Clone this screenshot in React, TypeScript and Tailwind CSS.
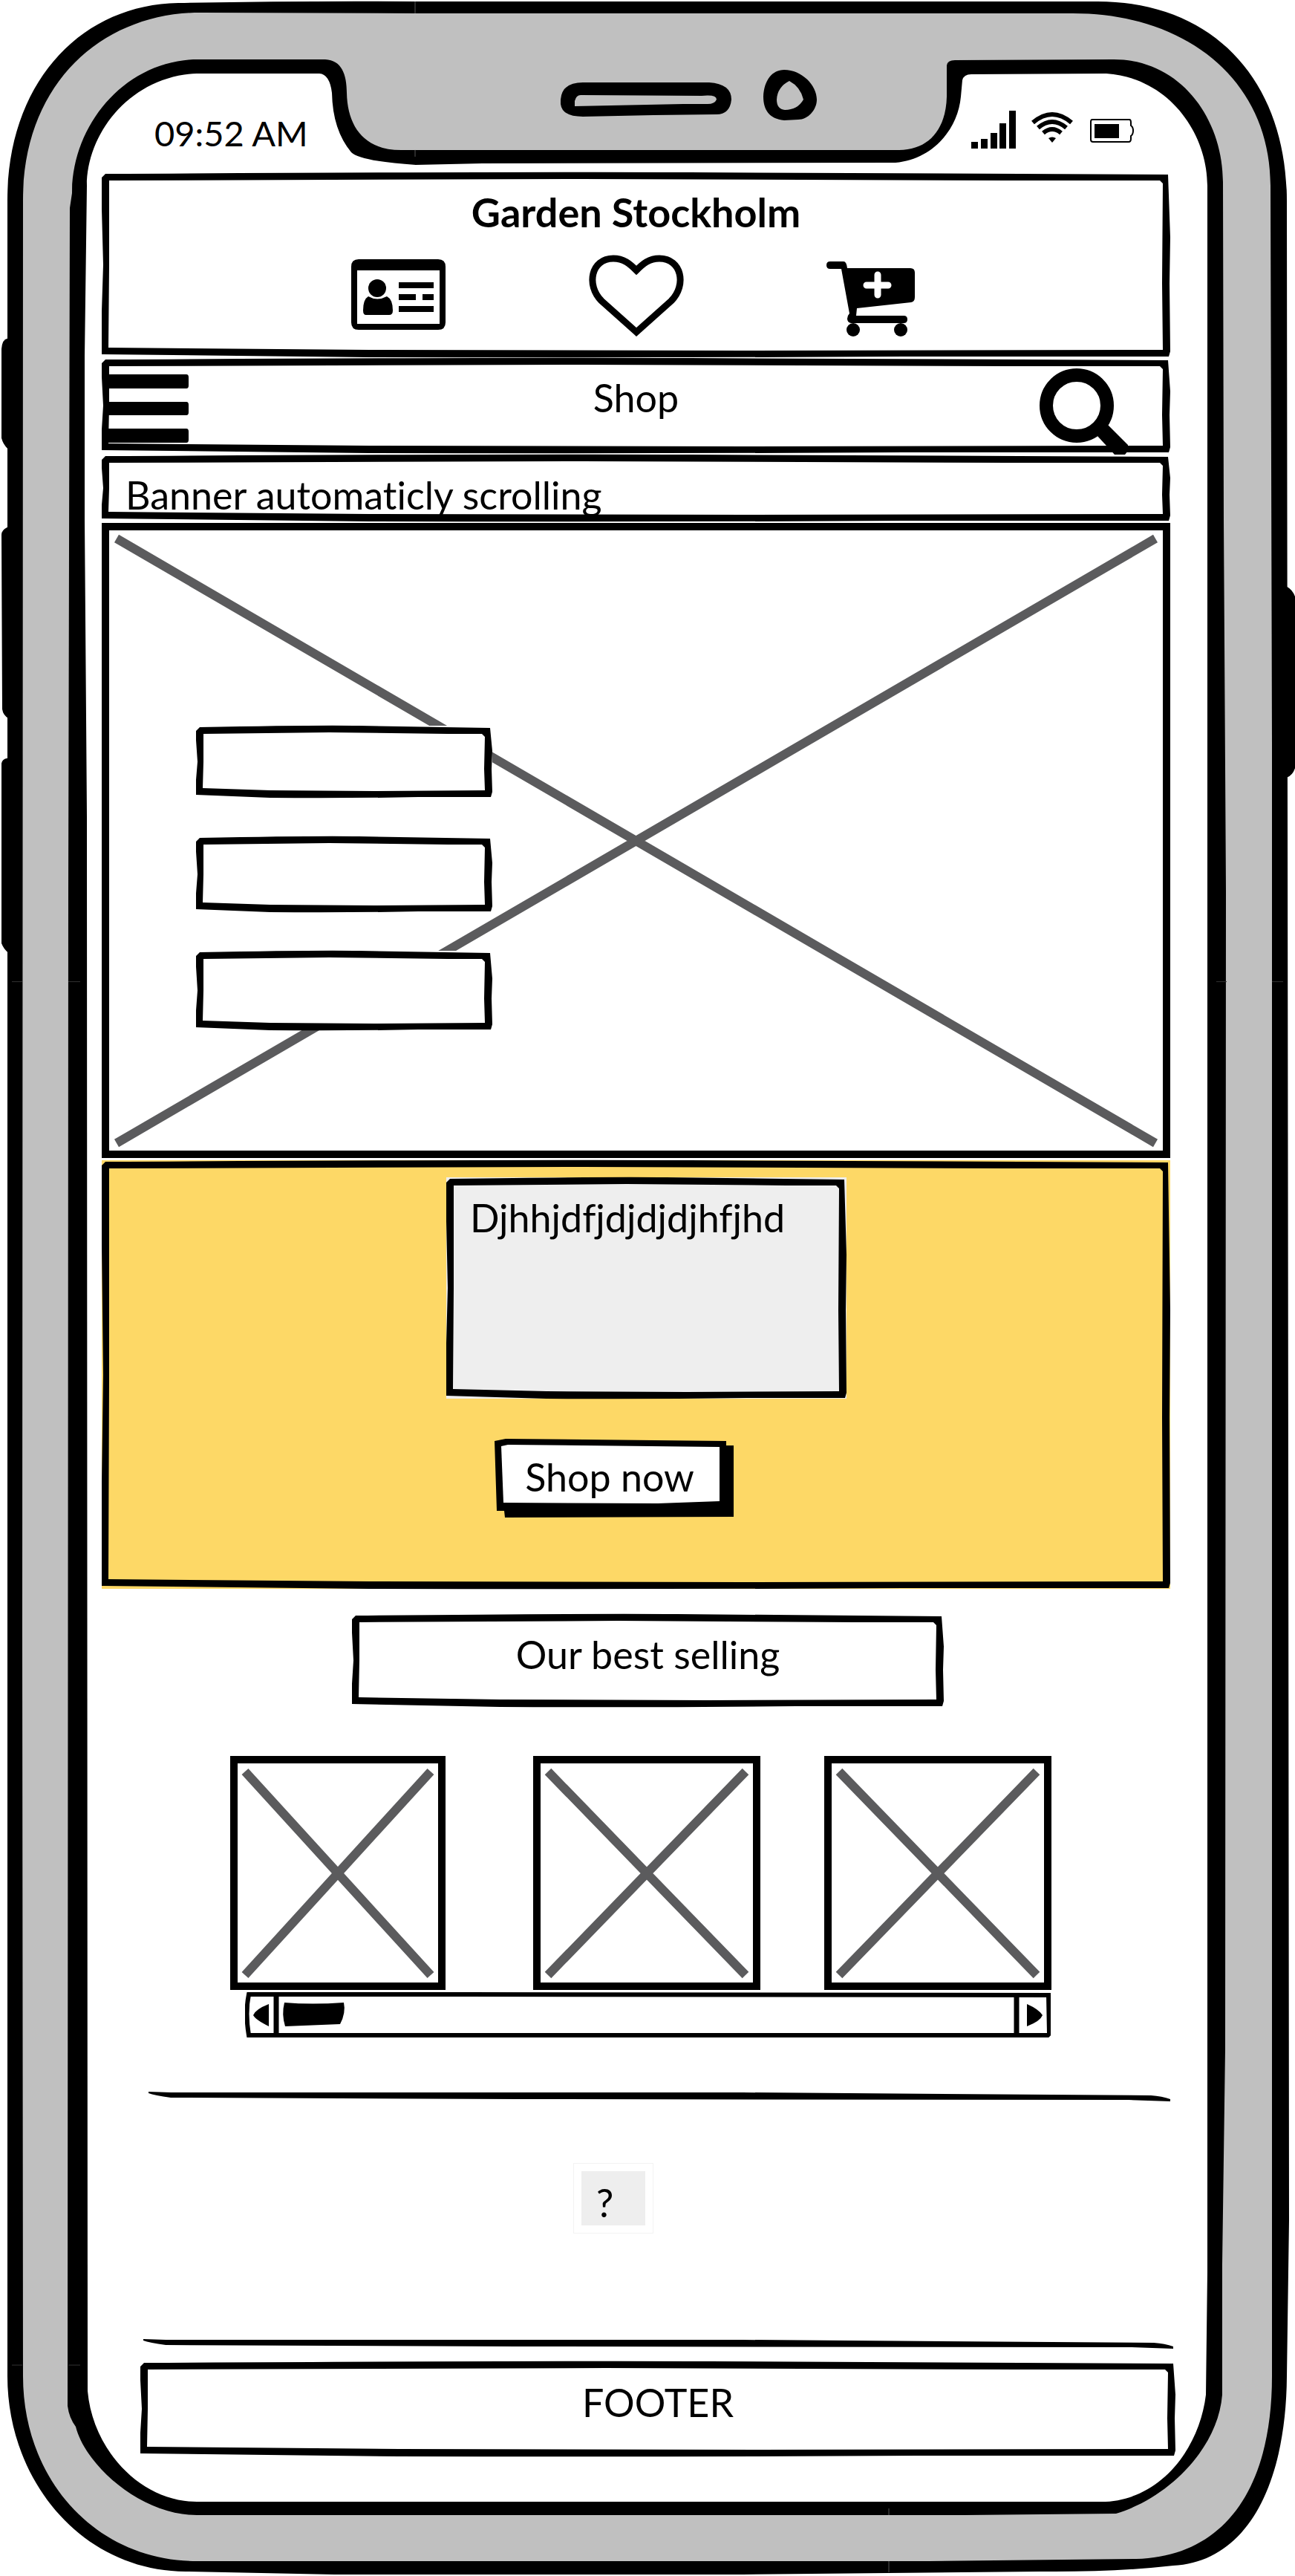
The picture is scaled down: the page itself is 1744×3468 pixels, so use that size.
import type { ReactNode } from "react";

/* Hand-drawn rectangle outline; w and h give the proportions of the wobble. */
function SketchOutline({ w, h }: { w: number; h: number }) {
  const outer = `M0,7 L5,2 Q${w * 0.4},-1 ${w * 0.55},0 L${w - 3},3 L${w},${h * 0.35} L${w - 1},${h * 0.6} L${w},${h - 8} L${w - 2},${h - 1} L${w * 0.75},${h - 1} Q${w * 0.5},${h + 1} ${w * 0.25},${h} L0,${h - 4} L0,${h * 0.75} L2,${h * 0.5} L0,${h * 0.2} Z`;
  const inner = `M10,11 L${w * 0.45},9 L${w * 0.85},11 L${w - 14},11 L${w - 10},15 L${w - 11},${h * 0.6} L${w - 10},${h - 10} L${w * 0.6},${h - 9} L${w * 0.25},${h - 10} L9,${h - 13} L10,${h * 0.5} Z`;
  return (
    <svg
      aria-hidden="true"
      className="pointer-events-none absolute inset-0 h-full w-full overflow-visible"
      viewBox={`0 0 ${w} ${h}`}
      preserveAspectRatio="none"
    >
      <path d={`${outer} ${inner}`} fill="#000" fillRule="evenodd" />
    </svg>
  );
}

function Placeholder({
  w,
  h,
  className,
  children,
}: {
  w: number;
  h: number;
  className: string;
  children?: ReactNode;
}) {
  return (
    <div className={`relative border-[10px] border-black bg-white ${className}`}>
      <svg
        aria-hidden="true"
        className="absolute inset-0 h-full w-full"
        viewBox={`0 0 ${w} ${h}`}
        preserveAspectRatio="none"
      >
        <path
          d={`M10,11 L${w - 10},${h - 10} M${w - 10},11 L10,${h - 10}`}
          stroke="#5b5b5d"
          strokeWidth="12"
          fill="none"
        />
      </svg>
      {children}
    </div>
  );
}

function PhoneFrame() {
  return (
    <svg
      aria-hidden="true"
      className="absolute inset-0 h-full w-full"
      viewBox="0 0 1744 3468"
      preserveAspectRatio="none"
    >
      <path
        d="M10,456 Q3,457 2,470 L2,590 Q4,598 10,604 Z M10,710 Q2,714 2,720 L3,955 Q4,963 12,968 Z M10,1021 Q3,1022 2,1028 L2,1270 Q4,1277 12,1284 Z M1733,790 Q1744,796 1746,812 V1025 Q1744,1043 1733,1047 Z"
        fill="#000"
      />
      <path
        d="M240,4 Q400,1 560,2 L1478,2 C1640,2 1733,115 1733,270 L1735,2000 L1736,2990 L1733,3200 C1732,3345 1680,3450 1580,3455 Q1500,3464 1400,3463 L1000,3467 L450,3467 L250,3463 C110,3462 10,3340 10,3200 L10,2000 L10,270 C10,110 110,6 240,4 Z"
        fill="#000"
      />
      <path
        d="M270,17 L560,18 L1445,18 C1600,18 1711,110 1711,250 L1713,1000 L1713,3200 C1713,3350 1650,3443 1530,3446 L1250,3449 L265,3449 C130,3449 31,3340 31,3200 L30,2200 L31,270 C31,110 140,17 270,17 Z"
        fill="#c0c0c0"
      />
      <path
        d="M260,80 L438,80 C460,81 467,100 467,125 C468,170 490,202 540,202 L1211,202 C1250,202 1274,175 1275,130 L1275,88 Q1276,81 1286,81 L1500,80 C1590,80 1647,160 1647,245 L1648,700 L1651,1200 L1650,2760 L1646,3050 L1646,3225 C1640,3300 1570,3365 1503,3385 L1300,3387 L265,3387 C190,3387 115,3320 102,3268 Q93,3256 91,3240 L92,1200 L94,280 L97,260 C97,170 165,85 260,80 Z"
        fill="#000"
      />
      <path
        d="M265,99 L430,99 Q444,100 447,125 Q448,175 473,205 Q485,217 560,222 L650,220 L1206,219 C1255,215 1290,175 1294,130 L1296,108 Q1298,100 1308,100 L1490,99 C1575,105 1626,180 1626,250 L1626,3060 L1624,3225 C1615,3300 1560,3369 1483,3369 L265,3369 C190,3369 125,3300 118,3220 L117,1100 L114,700 L114,480 L117,250 C117,180 175,103 265,99 Z"
        fill="#fff"
      />
      <path
        d="M785,111 L955,111 Q985,113 985,134 Q983,154 965,154 L880,155 L785,157 Q757,157 755,140 L755,134 Q757,111 785,111 Z"
        fill="#000"
      />
      <path d="M782,128 L945,129 Q965,127 965,134 Q962,141 950,140 L920,140 L774,143 L774,136 Q776,128 782,128 Z" fill="#c0c0c0" />
      <path
        d="M1056,94 C1080,94 1100,115 1100,134 C1100,148 1088,161 1075,161 L1056,162 C1036,160 1028,148 1028,130 C1029,108 1040,94 1056,94 Z"
        fill="#000"
      />
      <path d="M1063,109 Q1078,117 1082,134 Q1074,148 1057,148 Q1046,147 1046,134 Q1047,117 1063,109 Z" fill="#c0c0c0" />
      <path d="M559,2 V18 M559,202 V211 M1197,3378 V3387 M1197,3449 V3464" stroke="#555" fill="none" />
      <path d="M16,1322 H30 M92,1322 H108 M1652,1322 H1638 M1713,1322 H1728 M16,3185 H30 M92,3185 H108" stroke="#333" fill="none" />
    </svg>
  );
}

function StatusIcons() {
  return (
    <svg role="img" aria-label="Signal, wifi and battery" className="h-[52px] w-[219px]" viewBox="0 0 219 52">
      <path d="M0,42h9v9h-9z M13,38h9v13h-9z M26,30h9v21h-9z M38,17h9v34h-9z M51,0h9v51h-9z" />
      <g fill="none" stroke="#000" strokeWidth="6">
        <path d="M83,16 Q109,-6 135,16" />
        <path d="M90,23 Q109,7 128,23" />
        <path d="M97,30 Q109,20 121,30" />
      </g>
      <path d="M104,37 Q109,34 114,37 L109,43 Z" />
      <path
        d="M163,12 H213 Q215,12 215,16 V20 Q218,22 218,27 Q218,32 215,34 V38 Q215,42 212,42 H164 Q161,42 161,39 V15 Q161,12 163,12 Z"
        fill="#fff"
        stroke="#000"
        strokeWidth="2"
      />
      <path d="M166,18h33v19h-33z" />
    </svg>
  );
}

function IdCardIcon() {
  return (
    <svg aria-hidden="true" className="h-[110px] w-[128px]" viewBox="0 0 128 110">
      <path
        d="M10,6 H117 Q127,6 127,16 V91 Q127,101 117,101 H10 Q0,101 0,91 V16 Q0,6 10,6 Z M8,21 V93 H119 V21 Z"
        fillRule="evenodd"
      />
      <ellipse cx="35" cy="45" rx="12" ry="12" />
      <path d="M23,56 Q35,63 48,56 Q56,60 56,75 Q56,81 51,81 H20 Q16,81 16,75 Q16,60 23,56 Z" />
      <path d="M64,37h47v8H64z M64,53h23v8H64z M96,53h15v8H96z M64,69h47v8H64z" />
    </svg>
  );
}

function HeartIcon() {
  return (
    <svg aria-hidden="true" className="h-[110px] w-[128px]" viewBox="0 0 128 110">
      <path
        d="M64,104 L17,62 C-4,41 3,5 33,5 C47,5 55,12 64,21 C73,12 81,5 95,5 C125,5 132,41 111,62 Z"
        fill="none"
        stroke="#000"
        strokeWidth="9"
      />
    </svg>
  );
}

function CartIcon() {
  return (
    <svg aria-hidden="true" className="h-[110px] w-[128px]" viewBox="0 0 128 110">
      <path d="M5,9 H23 Q27,9 28,18 H113 Q119,18 119,24 V57 Q119,63 114,64 L41,72 L40,82 H104 Q109,82 109,87 Q109,92 104,92 H33 Q28,91 28,86 Q28,82 31,79 L20,19 H5 Q0,19 0,14 Q0,9 5,9 Z" />
      <path d="M69,27 V54 M54,41 H83" stroke="#fff" strokeWidth="9" strokeLinecap="round" />
      <circle cx="36" cy="101" r="9" />
      <circle cx="100" cy="101" r="9" />
    </svg>
  );
}

function SketchRule() {
  return (
    <svg
      aria-hidden="true"
      className="block h-[13px] w-full"
      viewBox="0 0 1376 13"
      preserveAspectRatio="none"
    >
      <path d="M0,0 L30,1 L800,1 L1350,5 Q1365,6 1376,10 L1376,13 L1320,11 L500,10 L30,8 Q8,5 0,2 Z" />
    </svg>
  );
}

export default function App() {
  return (
    <div className="relative w-full bg-white pb-[160px] font-[Lato,'Open_Sans',sans-serif] text-[52px] leading-[52px] text-black [font-variant-ligatures:none]">
      <PhoneFrame />
      <div className="relative pt-[149px] pr-[168px] pl-[137px]">
        <div className="flex h-[52px] items-start justify-between pr-[49px] pl-[71px]">
          <time className="pt-1 text-[47px]">09:52 AM</time>
          <StatusIcons />
        </div>

        <header className="relative mt-[31px] pt-7 pb-7">
          <SketchOutline w={1439} h={249} />
          <h1 className="text-center text-[54px] font-bold">Garden Stockholm</h1>
          <div className="mt-[31px] flex justify-center gap-48">
            <button type="button" aria-label="Account">
              <IdCardIcon />
            </button>
            <button type="button" aria-label="Favourites">
              <HeartIcon />
            </button>
            <button type="button" aria-label="Cart">
              <CartIcon />
            </button>
          </div>
        </header>

        <nav className="relative mt-px grid h-[128px] grid-cols-[1fr_auto_1fr] items-start">
          <SketchOutline w={1439} h={128} />
          <button type="button" aria-label="Menu" className="mt-[22px] ml-2 justify-self-start">
            <svg aria-hidden="true" className="h-[93px] w-[110px]" viewBox="0 0 110 93">
              <path d="M0,0h106q3,0 3,4v11q0,4 -3,4h-106z M0,37h106q3,0 3,4v10q0,4 -3,4h-106z M0,73h106q3,0 3,4v11q0,4 -3,4h-106z" />
            </svg>
          </button>
          <a href="#shop" className="mt-[27px]">
            Shop
          </a>
          <button type="button" aria-label="Search" className="mt-[13px] mr-[56px] justify-self-end">
            <svg aria-hidden="true" className="h-[118px] w-[120px]" viewBox="0 0 120 118">
              <circle cx="50" cy="51" r="41" fill="none" stroke="#000" strokeWidth="18" />
              <path d="M92,77 L119,104 V112 L115,117 H101 L78,92 Z" />
            </svg>
          </button>
        </nav>

        <div className="relative mt-0.5 pt-7 pb-2.5 pl-8">
          <SketchOutline w={1439} h={90} />
          <p className="relative whitespace-nowrap">Banner automaticly scrolling</p>
        </div>

        <Placeholder w={1419} h={835} className="mt-0.5 pt-[263px] pb-[162px] pl-[117px]">
          <div className="relative flex w-[399px] flex-col gap-[52px]">
            <div className="relative h-[97px] bg-white">
              <input aria-label="First field" className="h-full w-full px-6 outline-none" />
              <SketchOutline w={399} h={97} />
            </div>
            <div className="relative h-[102px] bg-white">
              <input aria-label="Second field" className="h-full w-full px-6 outline-none" />
              <SketchOutline w={399} h={102} />
            </div>
            <div className="relative h-[107px] bg-white">
              <input aria-label="Third field" className="h-full w-full px-6 outline-none" />
              <SketchOutline w={399} h={107} />
            </div>
          </div>
        </Placeholder>

        <section className="relative mt-[3px] bg-[#fdd866] pt-[23px] pb-24">
          <SketchOutline w={1439} h={577} />
          <div className="grid grid-cols-[464fr_539fr_436fr]">
            <div className="relative col-start-2 flex bg-[#eeeeee]">
              <textarea
                aria-label="Message"
                defaultValue="Djhhjdfjdjdjdjhfjhd"
                className="h-[298px] w-full resize-none overflow-hidden pt-7 pl-8 outline-none"
              />
              <SketchOutline w={539} h={298} />
            </div>
          </div>
          <div className="mt-[54px] grid grid-cols-[529fr_322fr_588fr]">
            <button type="button" className="relative col-start-2 pt-[25px] pr-[12px] pb-[29px]">
              <svg
                aria-hidden="true"
                className="absolute inset-0 h-full w-full"
                viewBox="0 0 322 106"
                preserveAspectRatio="none"
              >
                <path d="M0,3 L15,0 L312,3 V9 H322 V105 L14,106 L13,97 H3 Z" />
                <path d="M9,10 L18,8 L303,11 V84 L220,87 L12,86 Z" fill="#fff" />
              </svg>
              <span className="relative">Shop now</span>
            </button>
          </div>
        </section>

        <section>
          <div className="mt-[34px] grid grid-cols-[337fr_797fr_305fr]">
            <div className="relative col-start-2 pt-[28px] pb-[45px]">
              <SketchOutline w={797} h={125} />
              <h2 className="text-center">Our best selling</h2>
            </div>
          </div>
          <div className="mt-[66px] grid grid-cols-[173fr_290fr_118fr_306fr_86fr_306fr_160fr]">
            <Placeholder w={270} h={295} className="col-start-2 h-[315px]" />
            <Placeholder w={286} h={295} className="col-start-4 h-[315px]" />
            <Placeholder w={286} h={295} className="col-start-6 h-[315px]" />
          </div>
          <div className="mt-[3px] grid grid-cols-[193fr_1085fr_161fr]">
            <div className="relative col-start-2 flex h-[61px] items-center justify-between">
              <svg
                aria-hidden="true"
                className="absolute inset-0 h-full w-full"
                viewBox="0 0 1085 61"
                preserveAspectRatio="none"
              >
                <path
                  d="M5,3 L300,3 L1082,4 L1083,56 L1081,58 L5,58 Q0,28 5,3 Z"
                  fill="none"
                  stroke="#000"
                  strokeWidth="6"
                />
                <path d="M42,3 V58 M1039,3 V58" stroke="#000" strokeWidth="7" />
                <path d="M53,14 Q90,17 133,14 Q136,28 128,43 L54,46 Q49,30 53,14 Z" />
              </svg>
              <button type="button" aria-label="Scroll left" className="relative w-[43px] pl-2.5">
                <svg aria-hidden="true" className="h-8 w-6" viewBox="0 0 24 32">
                  <path d="M22,1 V31 Q4,22 1,16 Q4,8 22,1 Z" />
                </svg>
              </button>
              <button type="button" aria-label="Scroll right" className="relative w-[43px] pl-2.5">
                <svg aria-hidden="true" className="h-8 w-6" viewBox="0 0 24 32">
                  <path d="M1,1 Q17,8 22,16 Q19,24 1,31 Z" />
                </svg>
              </button>
            </div>
          </div>
        </section>

        <section className="mt-[73px] pl-[63px]">
          <SketchRule />
          <div className="mt-[83px] ml-[572px] w-[108px] border border-[#f3f3f3] p-[10px]">
            <div className="h-[73px] bg-[#eeeeee] pt-[16px] pl-[20px]">?</div>
          </div>
        </section>
        <div className="mt-[142px] -mr-1 pl-[56px]">
          <SketchRule />
        </div>

        <footer className="relative mt-[17px] -mr-[7px] ml-[52px] pt-[29px] pb-[47px] text-center">
          <SketchOutline w={1394} h={128} />
          FOOTER
        </footer>
      </div>
    </div>
  );
}
